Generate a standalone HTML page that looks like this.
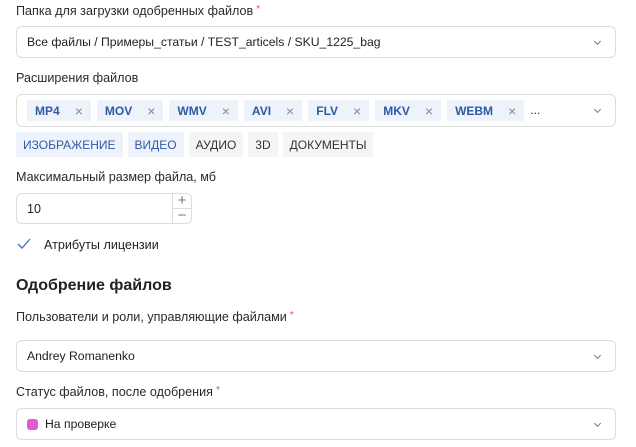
<!DOCTYPE html>
<html><head><meta charset="utf-8"><style>
*{box-sizing:border-box;margin:0;padding:0}
body{width:636px;height:447px;background:#fff;font-family:"Liberation Sans",sans-serif;color:#222;position:relative;overflow:hidden;font-size:13px}
.a{position:absolute}
.lbl{left:16px;font-size:12.6px;color:#2a2a2a}
.req{color:#d9534f;font-size:10px;vertical-align:top;margin-left:3px}
.box{left:16px;width:600px;border:1px solid #dcdcdc;border-radius:6px;height:32px;display:flex;align-items:center;padding-left:10px;font-size:12.2px}
.chev{position:absolute;right:15px;top:12px;width:5px;height:5px;border-right:1px solid #777;border-bottom:1px solid #777;transform:rotate(45deg)}
.tags{display:flex;gap:6px}
.tag{background:#eef3fb;color:#2d5aa6;font-weight:bold;height:21px;display:flex;align-items:center;padding:0 8px 0 8px;font-size:12px}
.tag i{font-style:normal;font-weight:normal;color:#888;margin-left:15px;font-size:14px}
.grp{display:flex;gap:5px;left:16px;top:132px}
.g{background:#f4f5f7;height:25px;display:flex;align-items:center;padding:0 7px;font-size:12px;color:#333}
.g.b{background:#eef3fb;color:#2d5aa6}
</style></head><body>
<div class="a lbl" style="top:4px">Папка для загрузки одобренных файлов<span class="req">*</span></div>
<div class="a box" style="top:26px">Все файлы / Примеры_статьи / TEST_articels / SKU_1225_bag<span class="chev"></span></div>
<div class="a lbl" style="top:71px">Расширения файлов</div>
<div class="a box" style="top:94px;height:33px">
<div class="tags"><div class="tag">MP4<i>×</i></div><div class="tag">MOV<i>×</i></div><div class="tag">WMV<i>×</i></div><div class="tag">AVI<i>×</i></div><div class="tag">FLV<i>×</i></div><div class="tag">MKV<i>×</i></div><div class="tag">WEBM<i>×</i></div><div style="line-height:21px">...</div></div><span class="chev"></span></div>
<div class="a grp"><div class="g b">ИЗОБРАЖЕНИЕ</div><div class="g b">ВИДЕО</div><div class="g">АУДИО</div><div class="g">3D</div><div class="g">ДОКУМЕНТЫ</div></div>
<div class="a lbl" style="top:170px">Максимальный размер файла, мб</div>
<div class="a" style="left:16px;top:193px;width:157px;height:31px;border:1px solid #dcdcdc;border-radius:6px 0 0 6px;padding:8px 10px;font-size:12.5px">10</div>
<div class="a" style="left:172px;top:193px;width:20px;height:31px;border:1px solid #dcdcdc;border-radius:0 6px 6px 0">
<div style="height:15px;border-bottom:1px solid #dcdcdc;text-align:center;color:#777;font-size:15px;line-height:14px">+</div>
<div style="text-align:center;color:#777;font-size:15px;line-height:14px">−</div></div>
<svg class="a" style="left:17px;top:238px" width="14" height="12"><path d="M1 6 L5 10 L13 1" fill="none" stroke="#3b6fc4" stroke-width="1.3"/></svg>
<div class="a" style="left:44px;top:238px;font-size:12.6px">Атрибуты лицензии</div>
<div class="a" style="left:16px;top:277px;font-size:16px;font-weight:bold;color:#222">Одобрение файлов</div>
<div class="a lbl" style="top:310px">Пользователи и роли, управляющие файлами<span class="req">*</span></div>
<div class="a box" style="top:340px">Andrey Romanenko<span class="chev"></span></div>
<div class="a lbl" style="top:385px">Статус файлов, после одобрения<span class="req">*</span></div>
<div class="a box" style="top:408px"><span style="display:inline-block;width:11px;height:11px;border-radius:3px;background:#e15ad8;margin-right:7px"></span>На проверке<span class="chev"></span></div>
</body></html>
